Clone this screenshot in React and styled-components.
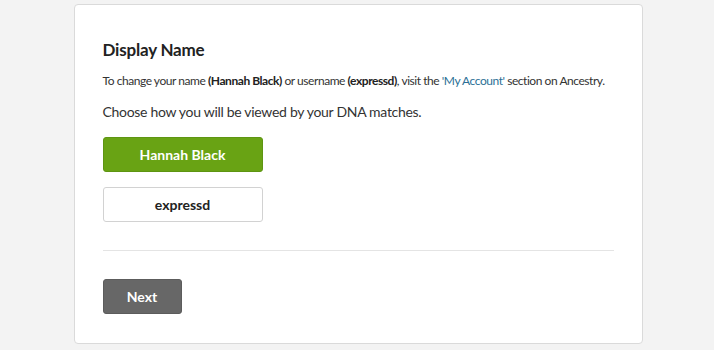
import React, { useState } from "react";
import styled, { createGlobalStyle } from "styled-components";

const GlobalStyle = createGlobalStyle`
  html, body {
    margin: 0;
    padding: 0;
    background: #f3f3f3;
    font-family: "Lato", "Liberation Sans", sans-serif;
    color: #333;
  }
`;

const Page = styled.div`
  display: flex;
  justify-content: center;
  padding: 4px 0 0 2px;
  height: 350px;
  box-sizing: border-box;
`;

const Card = styled.div`
  display: flex;
  flex-direction: column;
  align-items: flex-start;
  width: 569px;
  height: 340px;
  box-sizing: border-box;
  background: #fff;
  border: 1px solid #dadada;
  border-radius: 4px;
  padding: 33px 28px 0 28px;
`;

const Title = styled.h2`
  margin: 0;
  font-size: 17px;
  font-weight: 700;
  letter-spacing: -0.2px;
  line-height: 24px;
  color: #222;
`;

const Info = styled.p`
  margin: 10px 0 0;
  font-size: 12px;
  letter-spacing: -0.45px;
  line-height: 18px;
  white-space: nowrap;
  color: #333;

  b {
    font-weight: 700;
    color: #222;
  }
`;

const Link = styled.a`
  color: #2b6f96;
  text-decoration: none;
`;

const Prompt = styled.p`
  margin: 12px 0 0;
  font-size: 14px;
  letter-spacing: -0.3px;
  line-height: 20px;
  color: #333;
`;

const Options = styled.div`
  display: flex;
  flex-direction: column;
  gap: 15px;
  margin-top: 15px;
`;

const Option = styled.button`
  width: 160px;
  height: 35px;
  box-sizing: border-box;
  border-radius: 3px;
  font-family: inherit;
  font-size: 14px;
  font-weight: 700;
  cursor: pointer;
  border: 1px solid ${(p) => (p.$selected ? "#5e9512" : "#d2d2d2")};
  background: ${(p) => (p.$selected ? "#69a314" : "#fff")};
  color: ${(p) => (p.$selected ? "#fff" : "#222")};
`;

const Divider = styled.hr`
  align-self: stretch;
  margin: 28px 0 0;
  border: none;
  border-top: 1px solid #e4e4e4;
`;

const NextButton = styled.button`
  margin-top: 28px;
  width: 79px;
  height: 35px;
  box-sizing: border-box;
  border: 1px solid #5c5c5c;
  border-radius: 3px;
  background: #676767;
  color: #fff;
  font-family: inherit;
  font-size: 14px;
  font-weight: 700;
  cursor: pointer;
`;

export default function App() {
  const [choice, setChoice] = useState("name");
  return (
    <>
      <GlobalStyle />
      <Page>
        <Card>
          <Title>Display Name</Title>
          <Info>
            To change your name <b>(Hannah Black)</b> or username <b>(expressd)</b>, visit the{" "}
            <Link href="#">'My Account'</Link> section on Ancestry.
          </Info>
          <Prompt>Choose how you will be viewed by your DNA matches.</Prompt>
          <Options>
            <Option $selected={choice === "name"} onClick={() => setChoice("name")}>
              Hannah Black
            </Option>
            <Option $selected={choice === "user"} onClick={() => setChoice("user")}>
              expressd
            </Option>
          </Options>
          <Divider />
          <NextButton>Next</NextButton>
        </Card>
      </Page>
    </>
  );
}
